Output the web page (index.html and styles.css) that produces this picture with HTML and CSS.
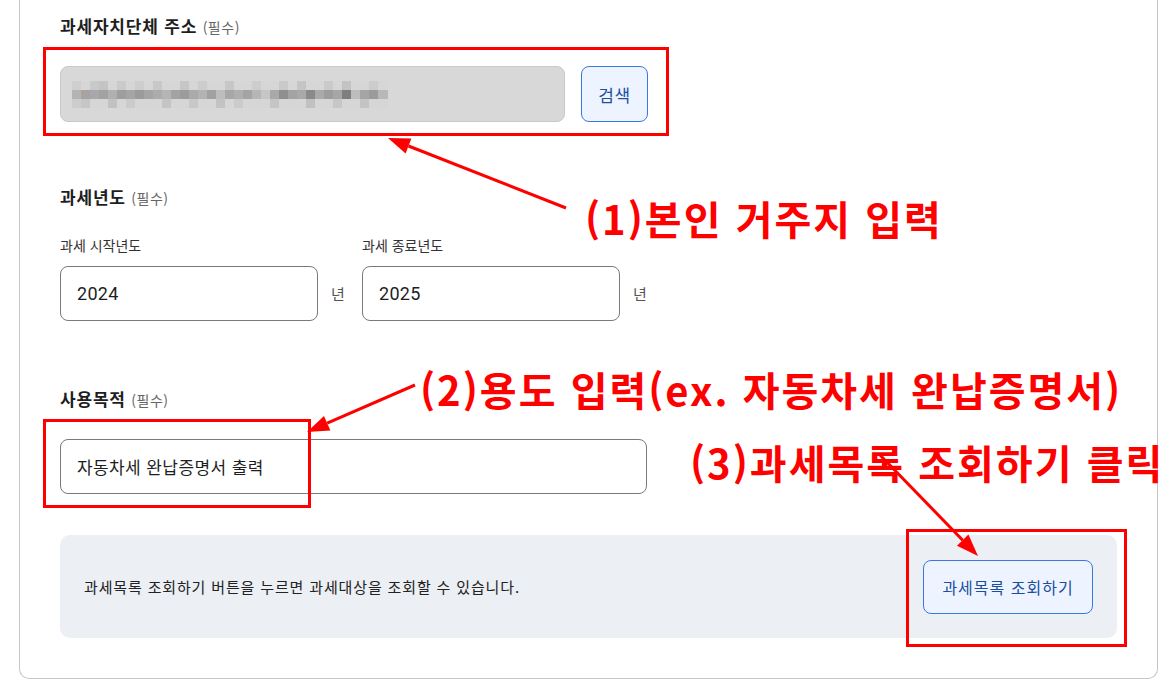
FILE: index.html
```html
<!DOCTYPE html>
<html lang="ko">
<head>
  <meta charset="UTF-8" />
  <title>과세증명 신청</title>
  <link rel="stylesheet" href="styles.css">
</head>
<body>
  <div class="page">
    <main class="card">
      <div class="label label-first">과세자치단체 주소 <span class="req">(필수)</span></div>
      <div class="addr-row">
        <div class="addr-input">
          <svg class="blur" width="316" height="27" viewBox="0 0 316 27">
            <rect x="0" y="0" width="316" height="27" fill="#d6d6d6"/>
            <g>
              <rect x="0" y="0" width="9" height="9" fill="#cfcfcf"/>
              <rect x="18" y="0" width="9" height="9" fill="#c9c9c9"/>
              <rect x="27" y="0" width="9" height="9" fill="#c4c4c4"/>
              <rect x="45" y="0" width="9" height="9" fill="#cacaca"/>
              <rect x="63" y="0" width="9" height="9" fill="#cdcdcd"/>
              <rect x="81" y="0" width="9" height="9" fill="#c8c8c8"/>
              <rect x="108" y="0" width="9" height="9" fill="#c6c6c6"/>
              <rect x="126" y="0" width="9" height="9" fill="#cccccc"/>
              <rect x="153" y="0" width="9" height="9" fill="#c7c7c7"/>
              <rect x="180" y="0" width="9" height="9" fill="#cdcdcd"/>
              <rect x="207" y="0" width="9" height="9" fill="#c9c9c9"/>
              <rect x="225" y="0" width="9" height="9" fill="#c5c5c5"/>
              <rect x="252" y="0" width="9" height="9" fill="#cacaca"/>
              <rect x="270" y="0" width="9" height="9" fill="#c3c3c3"/>
              <rect x="297" y="0" width="9" height="9" fill="#cccccc"/>
            </g>
            <g>
              <rect x="0" y="9" width="9" height="9" fill="#b4b4b4"/>
              <rect x="9" y="9" width="9" height="9" fill="#a9a39f"/>
              <rect x="18" y="9" width="9" height="9" fill="#a6a8ab"/>
              <rect x="27" y="9" width="9" height="9" fill="#a2a2a2"/>
              <rect x="36" y="9" width="9" height="9" fill="#b0b0b0"/>
              <rect x="45" y="9" width="9" height="9" fill="#9e9e9e"/>
              <rect x="54" y="9" width="9" height="9" fill="#a8a4a2"/>
              <rect x="63" y="9" width="9" height="9" fill="#9b9b9b"/>
              <rect x="72" y="9" width="9" height="9" fill="#a5a5a5"/>
              <rect x="81" y="9" width="9" height="9" fill="#acacac"/>
              <rect x="90" y="9" width="9" height="9" fill="#b5b5b5"/>
              <rect x="99" y="9" width="9" height="9" fill="#a3a3a3"/>
              <rect x="108" y="9" width="9" height="9" fill="#9a9da0"/>
              <rect x="117" y="9" width="9" height="9" fill="#aaaaaa"/>
              <rect x="126" y="9" width="9" height="9" fill="#b3b3b3"/>
              <rect x="135" y="9" width="9" height="9" fill="#a1a1a1"/>
              <rect x="144" y="9" width="9" height="9" fill="#bdbdbd"/>
              <rect x="153" y="9" width="9" height="9" fill="#a7a7a7"/>
              <rect x="162" y="9" width="9" height="9" fill="#afafaf"/>
              <rect x="171" y="9" width="9" height="9" fill="#a4a4a4"/>
              <rect x="180" y="9" width="9" height="9" fill="#b6b6b6"/>
              <rect x="189" y="9" width="9" height="9" fill="#c6c6c6"/>
              <rect x="198" y="9" width="9" height="9" fill="#a9a9a9"/>
              <rect x="207" y="9" width="9" height="9" fill="#8f8f8f"/>
              <rect x="216" y="9" width="9" height="9" fill="#a1a4a6"/>
              <rect x="225" y="9" width="9" height="9" fill="#a9a9a9"/>
              <rect x="234" y="9" width="9" height="9" fill="#8a8a8a"/>
              <rect x="243" y="9" width="9" height="9" fill="#aaaaaa"/>
              <rect x="252" y="9" width="9" height="9" fill="#9d9d9d"/>
              <rect x="261" y="9" width="9" height="9" fill="#a6a6a6"/>
              <rect x="270" y="9" width="9" height="9" fill="#7e7e7e"/>
              <rect x="279" y="9" width="9" height="9" fill="#bdbdbd"/>
              <rect x="288" y="9" width="9" height="9" fill="#a5a5a5"/>
              <rect x="297" y="9" width="9" height="9" fill="#9b9b9b"/>
              <rect x="306" y="9" width="10" height="9" fill="#b8b8b8"/>
            </g>
            <g>
              <rect x="0" y="18" width="9" height="9" fill="#cdcdcd"/>
              <rect x="9" y="18" width="9" height="9" fill="#c6c6c6"/>
              <rect x="36" y="18" width="9" height="9" fill="#c2c2c2"/>
              <rect x="54" y="18" width="9" height="9" fill="#cbcbcb"/>
              <rect x="90" y="18" width="9" height="9" fill="#c4c4c4"/>
              <rect x="117" y="18" width="9" height="9" fill="#c8c8c8"/>
              <rect x="144" y="18" width="9" height="9" fill="#c3c3c3"/>
              <rect x="162" y="18" width="9" height="9" fill="#cbcbcb"/>
              <rect x="198" y="18" width="9" height="9" fill="#c5c5c5"/>
              <rect x="234" y="18" width="9" height="9" fill="#c1c1c1"/>
              <rect x="261" y="18" width="9" height="9" fill="#c7c7c7"/>
              <rect x="288" y="18" width="9" height="9" fill="#c4c4c4"/>
            </g>
          </svg>
        </div>
        <button class="btn btn-search">검색</button>
      </div>

      <div class="label label-year">과세년도 <span class="req">(필수)</span></div>
      <div class="year-row">
        <div class="year-col">
          <div class="sublabel">과세 시작년도</div>
          <div class="year-line">
            <div class="text-input year-input">2024</div>
            <span class="unit">년</span>
          </div>
        </div>
        <div class="year-col">
          <div class="sublabel">과세 종료년도</div>
          <div class="year-line">
            <div class="text-input year-input">2025</div>
            <span class="unit">년</span>
          </div>
        </div>
      </div>

      <div class="label label-purpose">사용목적 <span class="req">(필수)</span></div>
      <div class="text-input purpose-input">자동차세 완납증명서 출력</div>

      <div class="notice">
        <p>과세목록 조회하기 버튼을 누르면 과세대상을 조회할 수 있습니다.</p>
        <button class="btn btn-lookup">과세목록 조회하기</button>
      </div>
    </main>

    <!-- 안내용 표시 -->
    <div class="mark mark-1"></div>
    <div class="mark mark-2"></div>
    <div class="mark mark-3"></div>

    <svg class="arrows" width="1174" height="694" viewBox="0 0 1174 694">
      <line x1="566" y1="208" x2="408.5" y2="146" stroke="#f00" stroke-width="3"/>
      <polygon points="388,138 411.4,138.6 405.6,153.5" fill="#f00"/>
      <line x1="415" y1="385" x2="327.2" y2="423.2" stroke="#f00" stroke-width="3"/>
      <polygon points="307,432 324,415.9 330.4,430.5" fill="#f00"/>
      <line x1="880" y1="455" x2="962.7" y2="540.2" stroke="#f00" stroke-width="3"/>
      <polygon points="978,556 957,545.8 968.4,534.6" fill="#f00"/>
    </svg>

    <div class="note note-1">(1)본인 거주지 입력</div>
    <div class="note note-2">(2)용도 입력(ex. 자동차세 완납증명서)</div>
    <div class="note note-3">(3)과세목록 조회하기 클릭</div>
  </div>
</body>
</html>
```

FILE: styles.css
```css
body {
  margin: 0;
  background-color: #fff;
  font-family: "Noto Sans CJK KR", "Noto Sans", sans-serif;
  color: #1e1e1e;
}

.page {
  position: relative;
  width: 1174px;
  height: 694px;
  overflow: hidden;
}

.card {
  margin-left: 19px;
  width: 1057px;
  padding: 0 40px 40px 40px;
  border: 1px solid #c6c6c6;
  border-top: none;
  border-radius: 0 0 10px 10px;
}

.label {
  font-size: 17px;
  font-weight: 700;
  line-height: 24px;
  letter-spacing: 0.8px;
  color: #1e1e1e;
}

.req {
  font-size: 14px;
  font-weight: 400;
  letter-spacing: 0.5px;
  color: #666;
}

.label-first {
  padding-top: 14px;
}

.label-year {
  margin-top: 63px;
}

.label-purpose {
  margin-top: 66px;
}

.addr-row {
  display: flex;
  gap: 16px;
  margin-top: 27px;
}

.addr-input {
  box-sizing: border-box;
  width: 505px;
  height: 56px;
  background-color: #d8d8d8;
  border: 1px solid #c9c9c9;
  border-radius: 8px;
  padding: 14px 0 0 11px;
}

.blur {
  display: block;
}

.btn {
  box-sizing: border-box;
  font-family: inherit;
  background-color: #edf4ff;
  border: 1px solid #3a78e0;
  border-radius: 8px;
  color: #1d4e9e;
  cursor: pointer;
  padding: 0;
}

.btn-search {
  width: 67px;
  height: 56px;
  font-size: 17px;
  letter-spacing: 0.5px;
}

.year-row {
  display: flex;
  gap: 17px;
  margin-top: 25px;
}

.sublabel {
  font-size: 14px;
  line-height: 20px;
  color: #333;
}

.year-line {
  display: flex;
  align-items: center;
  gap: 13px;
  margin-top: 11px;
}

.text-input {
  box-sizing: border-box;
  height: 55px;
  border: 1px solid #7a7a7a;
  border-radius: 8px;
  padding: 0 16px;
  display: flex;
  align-items: center;
  font-size: 17px;
  letter-spacing: 0.4px;
  color: #1e1e1e;
}

.year-input {
  width: 258px;
  font-family: Roboto, "Noto Sans CJK KR", sans-serif;
  font-size: 18px;
  letter-spacing: 0.3px;
}

.unit {
  font-size: 15px;
  color: #555;
  width: 14px;
}

.purpose-input {
  width: 587px;
  margin-top: 27px;
}

.notice {
  margin-top: 41px;
  height: 103px;
  box-sizing: border-box;
  background-color: #eceff4;
  border-radius: 10px;
  display: flex;
  align-items: center;
  justify-content: space-between;
  padding: 0 24px;
}

.notice p {
  margin: 0;
  font-size: 15px;
  letter-spacing: 0.85px;
  color: #222;
}

.btn-lookup {
  width: 170px;
  height: 54px;
  font-size: 16px;
  letter-spacing: 1px;
}

/* 빨간 안내 표시 */
.mark {
  position: absolute;
  border: 3px solid #f00;
}

.mark-1 {
  left: 43px;
  top: 47px;
  width: 620px;
  height: 83px;
}

.mark-2 {
  left: 43px;
  top: 419px;
  width: 262px;
  height: 83px;
}

.mark-3 {
  left: 906px;
  top: 529px;
  width: 215px;
  height: 112px;
}

.arrows {
  position: absolute;
  left: 0;
  top: 0;
}

.note {
  position: absolute;
  color: #f00;
  font-size: 40px;
  font-weight: 700;
  line-height: 48px;
  letter-spacing: 2px;
  white-space: nowrap;
}

.note-1 {
  left: 585px;
  top: 194px;
}

.note-2 {
  left: 420px;
  top: 365px;
}

.note-3 {
  left: 690px;
  top: 438px;
}
```
